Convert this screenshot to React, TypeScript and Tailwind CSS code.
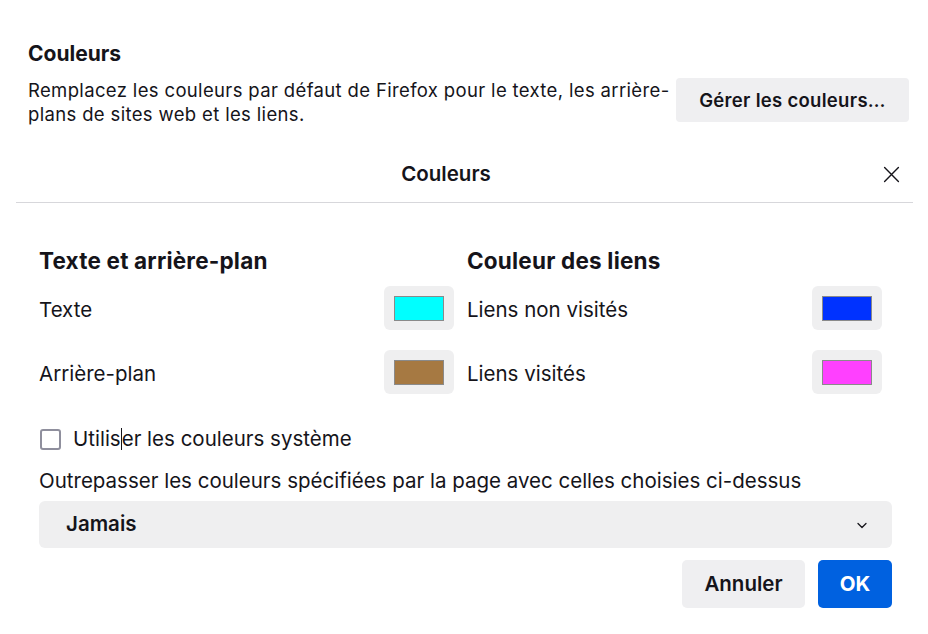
import React, { useState } from 'react';

const swatchRows = [
  { left: { label: 'Texte', color: '#00ffff' }, right: { label: 'Liens non visités', color: '#0032ff' } },
  { left: { label: 'Arrière-plan', color: '#a67942' }, right: { label: 'Liens visités', color: '#ff40ff' } },
];

const Swatch = ({ color }: { color: string }) => (
  <button className="w-[70px] h-[44px] rounded-[6px] bg-[#efeff0] flex items-center justify-center">
    <span className="block w-[50px] h-[25px] border border-[#8a8a8a]" style={{ backgroundColor: color }} />
  </button>
);

export default function App() {
  const [useSystem, setUseSystem] = useState(false);

  return (
    <div className="w-[928px] h-[634px] bg-white text-[#15141a] overflow-hidden font-['Inter',sans-serif]">
      {/* Preferences section */}
      <section className="px-[28px] pt-[41px]">
        <h1 className="text-[21px] font-bold leading-[26px]">Couleurs</h1>
        <div className="flex items-start justify-between mt-[11px]">
          <p className="text-[18.5px] leading-[24px] tracking-[0.35px] w-[648px]">
            Remplacez les couleurs par défaut de Firefox pour le texte, les arrière-plans de sites web et les liens.
          </p>
          <button className="mt-[0px] mr-[-9px] h-[44px] w-[233px] rounded-[4px] bg-[#efeff1] text-[18.5px] tracking-[0.3px] font-semibold">
            <span className="relative top-[1px]">Gérer les couleurs…</span>
          </button>
        </div>
      </section>

      {/* Dialog */}
      <div className="mx-[16px] mt-[30px] w-[897px]">
        <header className="relative h-[47px] flex items-center justify-center pr-[37px] border-b border-[#d7d7db]">
          <h2 className="text-[20.5px] font-semibold mt-[-10px]">Couleurs</h2>
          <button className="absolute right-[13px] top-[10px] w-[17px] h-[17px]">
            <svg viewBox="0 0 16 16" width="17" height="17" fill="none" stroke="#15141a" strokeWidth="1.3" strokeLinecap="round">
              <path d="M1.5 1.5l13 13M14.5 1.5l-13 13" />
            </svg>
          </button>
        </header>

        <div className="pl-[23px] pr-[21px] pt-[44px]">
          <div className="grid grid-cols-[415px_415px] gap-x-[13px]">
            <h3 className="text-[22.5px] font-bold leading-[28px] tracking-[0.2px]">Texte et arrière-plan</h3>
            <h3 className="text-[22.5px] font-bold leading-[28px] tracking-[0.2px]">Couleur des liens</h3>
          </div>
          <div className="mt-[11px] flex flex-col gap-[20px]">
            {swatchRows.map((row) => (
              <div key={row.left.label} className="grid grid-cols-[415px_415px] gap-x-[13px] text-[20.5px]">
                <div className="flex items-center justify-between">
                  <span className="mt-[4px]">{row.left.label}</span>
                  <Swatch color={row.left.color} />
                </div>
                <div className="flex items-center justify-between">
                  <span className="mt-[4px]">{row.right.label}</span>
                  <Swatch color={row.right.color} />
                </div>
              </div>
            ))}
          </div>

          <label className="mt-[33px] flex items-center gap-[12px] text-[20.5px] leading-[24px]">
            <input
              type="checkbox"
              checked={useSystem}
              onChange={(e) => setUseSystem(e.target.checked)}
              className="appearance-none w-[21px] h-[21px] ml-[1px] rounded-[3px] border-2 border-[#8f8f9d] bg-white"
            />
            <span>
              Utilis<span className="inline-block w-px h-[22px] bg-[#15141a] align-[-4px]" />er les couleurs système
            </span>
          </label>

          <p className="mt-[18px] text-[20.5px] leading-[24px]">
            Outrepasser les couleurs spécifiées par la page avec celles choisies ci-dessus
          </p>

          <button className="mt-[8px] w-full h-[47px] rounded-[6px] bg-[#efeff0] flex items-center justify-between pl-[27px] pr-[24px]">
            <span className="text-[20.5px] font-semibold">Jamais</span>
            <svg viewBox="0 0 12 12" width="12" height="12" fill="none" stroke="#15141a" strokeWidth="1.3" strokeLinecap="round" strokeLinejoin="round">
              <path d="M2 4.5l4 4 4-4" />
            </svg>
          </button>

          <div className="mt-[12px] flex justify-end gap-[13px]">
            <button className="h-[48px] w-[123px] rounded-[5px] bg-[#efeff1] text-[20.5px] font-semibold">Annuler</button>
            <button className="h-[48px] w-[74px] rounded-[5px] bg-[#0061e0] text-white text-[20.5px] font-bold">OK</button>
          </div>
        </div>
      </div>
    </div>
  );
}
